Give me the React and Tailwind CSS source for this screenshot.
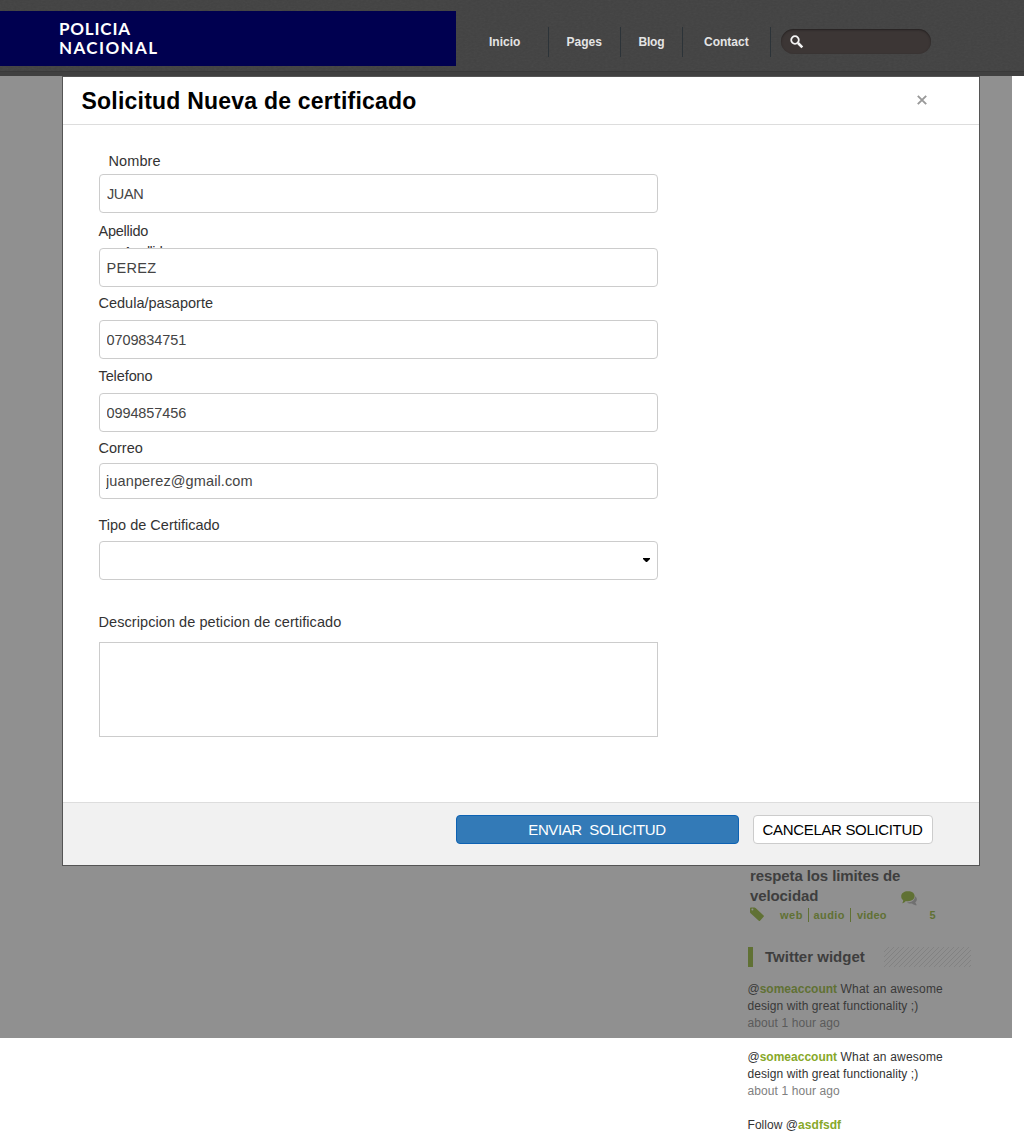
import React from 'react';

const labelClass = 'block h-[20px] shrink-0 whitespace-nowrap text-[14.5px] leading-[20px] text-[#333333] -ml-[0.5px]';
const boxClass = 'block w-[559px] shrink-0 rounded-[4px] border border-[#cccccc] bg-white text-[14.5px] text-[#444444] outline-none';

function Header() {
  return (
    <header className="relative h-[76px] w-full bg-[#424242]">
      <svg className="absolute inset-0 h-full w-full opacity-[0.05]" aria-hidden="true">
        <filter id="grain">
          <feTurbulence type="fractalNoise" baseFrequency="0.35 0.6" numOctaves="2" />
          <feColorMatrix type="saturate" values="0" />
        </filter>
        <rect width="100%" height="100%" filter="url(#grain)" />
      </svg>
      <div className="relative flex h-full flex-col">
        <div className="flex pt-[11px]">
          <div className="h-[55px] w-[456px] bg-[#000050] pl-[59px] pt-[8px] text-white">
            <div className="whitespace-nowrap font-['Lato'] text-[17px] font-bold leading-[19px]">
              <span className="tracking-[0.8px]">POLICIA</span>
              <br />
              <span className="tracking-[1.4px]">NACIONAL</span>
            </div>
          </div>
          <nav className="flex h-[30px] pt-[16px] text-[12px] font-bold leading-[30px] text-[#e4e4e4]">
            <div className="flex h-[30px] w-[93px] items-center border-r border-[#2c3338] pl-[33px]">Inicio</div>
            <div className="flex h-[30px] w-[72px] items-center border-r border-[#2c3338] pl-[17.5px]">Pages</div>
            <div className="flex h-[30px] w-[62px] items-center border-r border-[#2c3338] pl-[17.5px] tracking-[-0.2px]">Blog</div>
            <div className="flex h-[30px] w-[88px] items-center border-r border-[#2c3338] pl-[21px]">Contact</div>
          </nav>
          <div className="ml-[10px] mt-[18px] flex h-[25px] w-[150px] items-center rounded-full bg-[#3c3635] pl-[9px] shadow-[inset_0_1px_2px_#242020]">
            <svg width="14" height="14" viewBox="0 0 14 14" fill="none" stroke="#f4f4f4">
              <circle cx="5" cy="5" r="3.8" strokeWidth="1.8" />
              <path d="M8 8 L12.3 12.3" strokeWidth="2.6" />
            </svg>
          </div>
        </div>
        <div className="mt-[5px] h-px bg-[#3a3a3a]" />
        <div className="h-[4px] bg-[#404040]" />
      </div>
    </header>
  );
}

function Modal() {
  return (
    <section className="ml-[62px] flex h-[790px] w-[918px] shrink-0 flex-col border border-[#555555] bg-white">
      <div className="flex h-[48px] shrink-0 items-start justify-between border-b border-[#dddddd] pl-[18.5px] pr-[52px]">
        <h1 className="whitespace-nowrap pt-[9px] text-[23px] font-bold leading-[30px] tracking-[0.22px] text-black">Solicitud Nueva de certificado</h1>
        <svg className="mt-[17.5px]" width="10" height="10" viewBox="0 0 10 10" stroke="#999999" strokeWidth="1.9">
          <path d="M0.8 0.8 L9.2 9.2 M9.2 0.8 L0.8 9.2" />
        </svg>
      </div>
      <form className="flex h-[677px] shrink-0 flex-col items-start pl-[36px] pt-[26px]">
        <label className={`${labelClass} pl-[10px] tracking-[0.1px]`}>Nombre</label>
        <input className={`${boxClass} mt-[3px] h-[39px] pl-[7px] tracking-[-0.4px]`} defaultValue="JUAN" />
        <label className={`${labelClass} mt-[8px] tracking-[-0.25px]`}>Apellido</label>
        <div className="mt-[5px] h-[2px] overflow-hidden pl-[24px] text-[14.5px] leading-[20px] tracking-[-0.6px] text-[#333333]">
          <div className="-mt-[4px]">Apellido</div>
        </div>
        <input className={`${boxClass} h-[39px] pl-[6.5px] tracking-[0.3px]`} defaultValue="PEREZ" />
        <label className={`${labelClass} mt-[6px]`}>Cedula/pasaporte</label>
        <input className={`${boxClass} mt-[7px] h-[39px] pl-[6.5px] tracking-[-0.1px]`} defaultValue="0709834751" />
        <label className={`${labelClass} mt-[7px] tracking-[-0.1px]`}>Telefono</label>
        <input className={`${boxClass} mt-[7px] h-[39px] pl-[6.5px] tracking-[-0.1px]`} defaultValue="0994857456" />
        <label className={`${labelClass} mt-[6px]`}>Correo</label>
        <input className={`${boxClass} mt-[5px] h-[36px] pl-[6px] tracking-[0.12px]`} defaultValue="juanperez@gmail.com" />
        <label className={`${labelClass} mt-[16px]`}>Tipo de Certificado</label>
        <div className={`${boxClass} mt-[6px] h-[39px] pl-[543px] pt-[16px]`}>
          <svg width="7" height="4" viewBox="0 0 7 4" fill="black">
            <path d="M0 0 H7 V1 L4 4 H3 L0 1 Z" />
          </svg>
        </div>
        <label className={`${labelClass} mt-[32px] tracking-[0.07px]`}>Descripcion de peticion de certificado</label>
        <textarea className="mt-[10px] block h-[95px] w-[559px] shrink-0 resize-none border border-[#cccccc] bg-white outline-none" />
      </form>
      <div className="flex h-[63px] shrink-0 border-t border-[#dddddd] bg-[#f1f1f1] pl-[393px] pt-[12px] text-[15px]">
        <button className="h-[29px] w-[283px] whitespace-pre rounded-[4px] border border-[#0d62b3] bg-[#337ab7] pr-[1px] pt-[1px] tracking-[-0.4px] text-white">ENVIAR  SOLICITUD</button>
        <button className="ml-[14px] h-[29px] w-[180px] whitespace-nowrap rounded-[4px] border border-[#cccccc] bg-white pr-[1px] pt-[1px] tracking-[-0.33px] text-black">CANCELAR SOLICITUD</button>
      </div>
    </section>
  );
}

function Post() {
  return (
    <article className="ml-[750px] h-[81px] w-[222px] shrink-0 text-[#3e3e3e]">
      <div className="flex h-[40px]">
        <h2 className="w-[151px] whitespace-nowrap text-[15px] font-bold leading-[20px] tracking-[-0.1px]">
          respeta los limites de
          <br />
          velocidad
        </h2>
        <svg className="mt-[25px]" width="17" height="15" viewBox="0 0 17 15">
          <path d="M14 5.2 C16.6 7 16.4 9.8 14.2 11.3 L15.8 14.3 C14 14.2 12.2 13.6 11 12.4 C9 12.9 7 12.2 6 11.4 C11 11.5 14.2 9 14 5.2Z" fill="#707070" />
          <path d="M7 0.2 C11 0.2 13.6 2.2 13.6 5.1 C13.6 8 11 10.2 7 10.2 C6.2 10.2 5.4 10.1 4.7 9.9 C3.8 11.2 2.6 12 1.2 12.2 C1.9 11.3 2.2 10.2 2.2 9.1 C.8 8.2 0.2 6.9 0.2 5.2 C0.2 2.2 3 0.2 7 0.2Z" fill="#607134" />
        </svg>
      </div>
      <div className="mt-[1px] flex h-[16px] items-center text-[11px] font-bold leading-[14px] tracking-[0.4px] text-[#607134]">
        <svg className="-mt-[2px] w-[15px]" width="15" height="15" viewBox="0 0 15 15">
          <path fillRule="evenodd" d="M0 1.4 Q0 0.4 1 0.4 H4.5 Q5 0.4 5.6 .9 L13.6 8.6 Q14.2 9.2 13.6 9.8 L10 13.8 Q9.4 14.2 8.8 13.8 L.6 6.2 Q0 5.5 0 4.9Z M2.4 1.5 A1 1 0 1 0 2.4 3.5 A1 1 0 1 0 2.4 1.5" fill="#607134" />
        </svg>
        <span className="ml-[15px] w-[28px] tracking-[0.5px]">web</span>
        <span className="h-[14px] w-px bg-[#607134]" />
        <span className="ml-[4.5px] w-[36.5px]">audio</span>
        <span className="h-[14px] w-px bg-[#607134]" />
        <span className="ml-[6px] w-[72.5px] tracking-[0.2px]">video</span>
        <span>5</span>
      </div>
    </article>
  );
}

function Tweet({ dim }) {
  return (
    <div className="h-[68px] whitespace-nowrap text-[12px] leading-[17px]">
      <div className={dim ? 'text-[#393939]' : 'text-[#333333]'}>
        @<b className={dim ? 'text-[#607134]' : 'text-[#87a829]'}>someaccount</b>
        <span className="tracking-[0.2px]"> What an awesome</span>
        <br />
        <span className="tracking-[0.08px]">design with great functionality ;)</span>
      </div>
      <div className={dim ? 'tracking-[0.1px] text-[#5b5b5b]' : 'tracking-[0.1px] text-[#808080]'}>about 1 hour ago</div>
    </div>
  );
}

export default function App() {
  return (
    <div className="h-[1132px] w-[1024px] overflow-hidden bg-white font-['Liberation_Sans',Arial,sans-serif]">
      <Header />
      <main className="flex h-[962px] w-[1012px] flex-col bg-[#909090]">
        <Modal />
        <Post />
        <aside className="ml-[747.5px] w-[224px] shrink-0">
          <div className="flex h-[20px] items-center">
            <span className="ml-[0.5px] h-[20px] w-[5px] bg-[#607134]" />
            <h3 className="ml-[12px] w-[119px] whitespace-nowrap text-[15px] font-bold text-[#3e3e3e]">Twitter widget</h3>
            <svg width="87" height="20">
              <defs>
                <pattern id="hatch" width="5" height="5" patternUnits="userSpaceOnUse">
                  <path d="M-1 6 L6 -1 M-1 1 L1 -1 M4 6 L6 4" stroke="#7c7c7c" strokeWidth="0.7" />
                </pattern>
              </defs>
              <rect width="87" height="20" fill="url(#hatch)" />
            </svg>
          </div>
          <div className="mt-[14px]">
            <Tweet dim />
          </div>
        </aside>
      </main>
      <footer className="ml-[747.5px] pt-[11px]">
        <Tweet />
        <div className="whitespace-nowrap text-[12px] leading-[17px] tracking-[0.05px] text-[#333333]">
          Follow @<b className="text-[#87a829]">asdfsdf</b>
        </div>
      </footer>
    </div>
  );
}
